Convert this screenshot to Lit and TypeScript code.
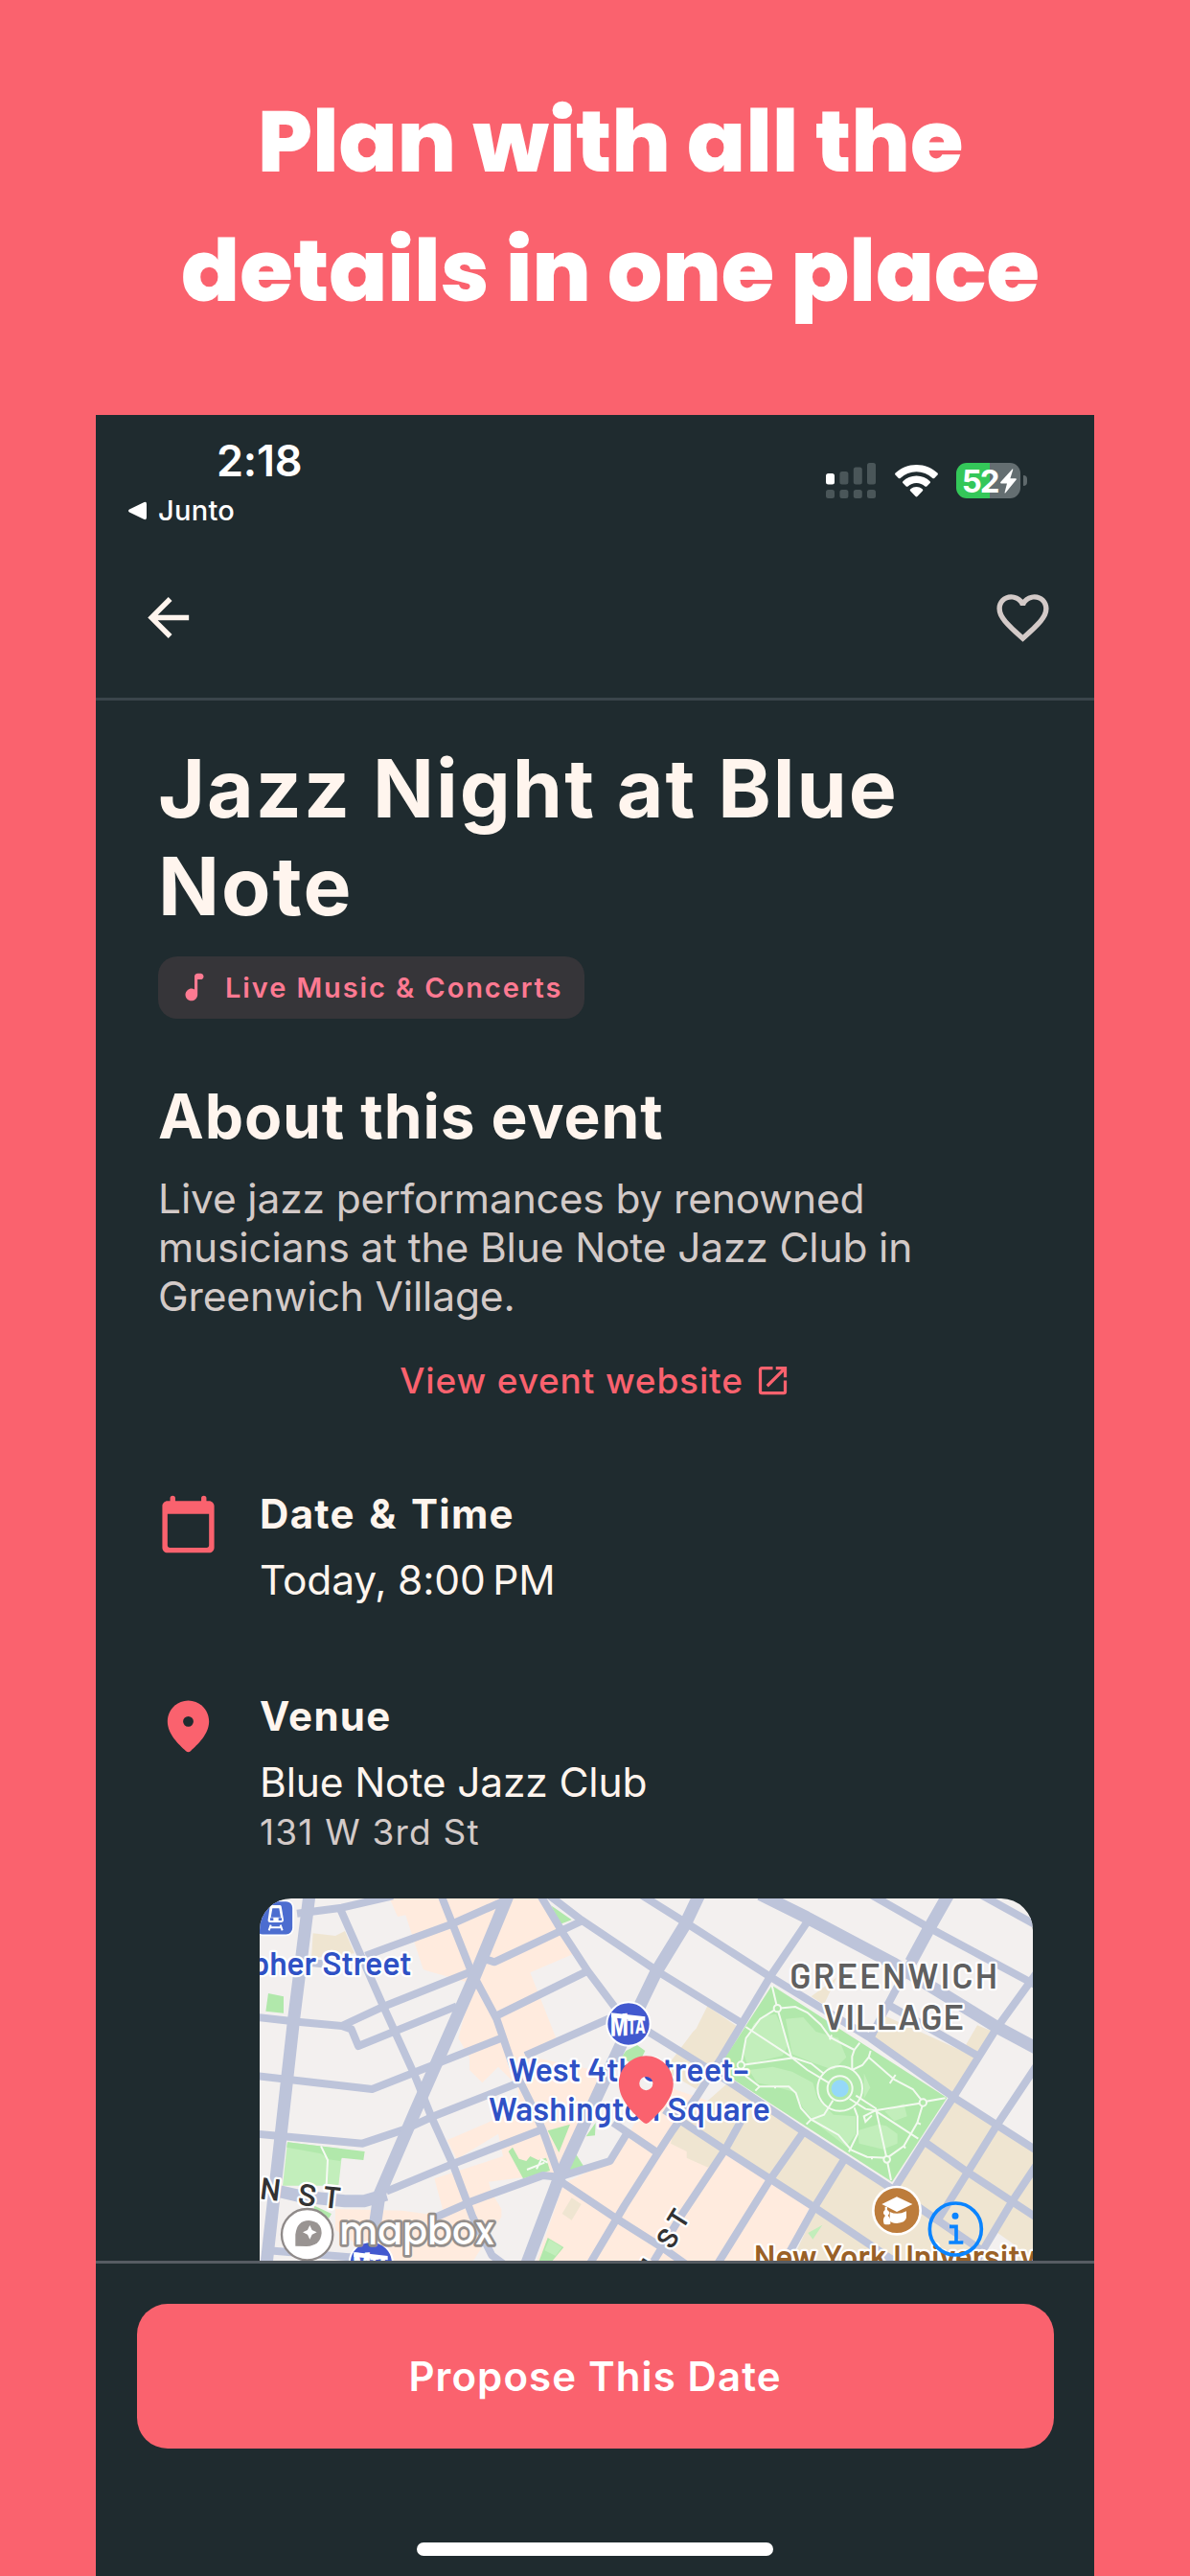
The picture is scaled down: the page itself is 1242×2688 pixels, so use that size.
import { LitElement, html, css, svg } from 'lit';
import { customElement, property, state } from 'lit/decorators.js';

const ICONS = {
  back: 'M20,11V13H8L13.5,18.5L12.08,19.92L4.16,12L12.08,4.08L13.5,5.5L8,11H20Z',
  heart:
    'M12.1,18.55L12,18.65L11.89,18.55C7.14,14.24 4,11.39 4,8.5C4,6.5 5.5,5 7.5,5C9.04,5 10.54,6 11.07,7.36H12.93C13.46,6 14.96,5 16.5,5C18.5,5 20,6.5 20,8.5C20,11.39 16.86,14.24 12.1,18.55M16.5,3C14.76,3 13.09,3.81 12,5.08C10.91,3.81 9.24,3 7.5,3C4.42,3 2,5.41 2,8.5C2,12.27 5.4,15.36 10.55,20.03L12,21.35L13.45,20.03C18.6,15.36 22,12.27 22,8.5C22,5.41 19.58,3 16.5,3Z',
  music:
    'M12 5v8.55c-.94-.54-2.1-.75-3.33-.32-1.34.48-2.37 1.67-2.61 3.07-.46 2.74 1.86 5.08 4.59 4.65 1.96-.31 3.35-2.11 3.35-4.1V7h2c1.1 0 2-.9 2-2s-.9-2-2-2h-2c-1.1 0-2 .9-2 2z',
  external:
    'M14,3V5H17.59L7.76,14.83L9.17,16.24L19,6.41V10H21V3M19,19H5V5H12V3H5C3.89,3 3,3.9 3,5V19A2,2 0 0,0 5,21H19A2,2 0 0,0 21,19V12H19V19Z',
  calendar:
    'M20 3h-1V2a1 1 0 0 0-2 0v1H7V2a1 1 0 0 0-2 0v1H4c-1.1 0-2 .9-2 2v16c0 1.1.9 2 2 2h16c1.1 0 2-.9 2-2V5c0-1.1-.9-2-2-2zM4 8h16v12a1 1 0 0 1-1 1H5a1 1 0 0 1-1-1z',
  pin: 'M12 2C7.6 2 4 5.6 4 10.1C4 15 8.4 19 11.1 21.5Q12 22.3 12.9 21.5C15.6 19 20 15 20 10.1C20 5.6 16.4 2 12 2ZM12 8.1a2 2 0 1 1 0 4a2 2 0 1 1 0-4z',
};

/**
 * AppIcon - one 24x24 glyph, sized by the host
 */
@customElement('app-icon')
export class AppIcon extends LitElement {
  @property() name: keyof typeof ICONS = 'back';

  static styles = css`
    :host {
      display: block;
      flex: none;
    }

    svg {
      display: block;
      width: 100%;
      height: 100%;
      fill: currentColor;
    }
  `;

  render() {
    return html`<svg viewBox="0 0 24 24"><path fill-rule="evenodd" d=${ICONS[this.name]} /></svg>`;
  }
}

/**
 * StatusBar - clock, return link, signal, wifi and battery
 */
@customElement('status-bar')
export class StatusBar extends LitElement {
  @property() time = '2:18';
  @property({ type: Number }) battery = 52;

  static styles = css`
    :host {
      display: flex;
      justify-content: space-between;
      box-sizing: border-box;
      height: 137px;
      padding: 0 70px 0 34px;
      color: #fff;
    }

    .left {
      padding-top: 20px;
    }

    .time {
      margin-left: 92px;
      font-size: 45px;
      font-weight: 600;
      line-height: 56px;
      letter-spacing: -0.2px;
    }

    .return {
      display: flex;
      align-items: center;
      gap: 12px;
      margin-top: 6px;
      font-size: 29px;
      font-weight: 500;
      line-height: 36px;
      letter-spacing: 0.3px;
    }

    .return svg {
      width: 19px;
      height: 20px;
      fill: #fff;
    }

    .right {
      display: flex;
      align-items: center;
    }

    .signal {
      width: 52px;
      height: 37px;
      margin-right: 20px;
    }

    .wifi {
      width: 45px;
      height: 34px;
      margin-right: 19px;
    }

    .battery {
      display: flex;
      align-items: center;
      justify-content: center;
      gap: 1px;
      box-sizing: border-box;
      width: 67px;
      height: 37px;
      padding-left: 2px;
      border-radius: 11px;
      font-size: 33px;
      font-weight: 700;
      letter-spacing: -2.2px;
    }

    .bolt {
      width: 17px;
      height: 26px;
      margin-left: 2px;
      fill: #fff;
    }

    .nub {
      width: 4px;
      height: 11px;
      margin-left: 3px;
      border-radius: 0 5px 5px 0;
      background: #5f696c;
    }
  `;

  render() {
    const fill = `linear-gradient(90deg, #34c759 ${this.battery}%, #646e71 ${this.battery}%)`;
    return html`
      <div class="left">
        <div class="time">${this.time}</div>
        <div class="return">
          <svg viewBox="0 0 19 20">
            <path d="M1 8.6 L16 1.2 Q19 0 19 3 V17 Q19 20 16 18.8 L1 11.4 Q-1 10 1 8.6Z" />
          </svg>
          <span>Junto</span>
        </div>
      </div>
      <div class="right">
        <svg class="signal" viewBox="0 0 52 37" fill="#4a5659">
          <rect x="0" y="11" width="9" height="11.5" rx="2.5" fill="#fff" />
          <rect x="14.4" y="9" width="9" height="13.5" rx="2.5" />
          <rect x="28.8" y="4.5" width="9" height="18" rx="2.5" />
          <rect x="43" y="0" width="9" height="22.5" rx="2.5" />
          ${[0, 14.4, 28.8, 43].map(
            (x) => svg`<rect x=${x} y="28" width="9" height="9" rx="2.5" />`
          )}
        </svg>
        <svg class="wifi" viewBox="0 0 45 34" fill="#fff">
          <path d="M22.5 0C31 0 38.8 3.3 44.4 8.6Q45.4 9.6 44.5 10.6L41.2 13.9Q40.3 14.8 39.3 13.9A24.5 24.5 0 0 0 5.7 13.9Q4.7 14.8 3.8 13.9L.5 10.6Q-.4 9.6.6 8.6C6.2 3.3 14 0 22.5 0Z" />
          <path d="M22.5 11.6C28 11.6 33 13.8 36.6 17.2Q37.6 18.2 36.7 19.1L33.3 22.4Q32.4 23.3 31.4 22.4A13 13 0 0 0 13.6 22.4Q12.6 23.3 11.7 22.4L8.3 19.1Q7.4 18.2 8.4 17.2C12 13.8 17 11.6 22.5 11.6Z" />
          <path d="M22.5 23C25 23 27.2 23.9 28.9 25.4Q29.8 26.3 28.9 27.2L23.4 33Q22.5 33.9 21.6 33L16.1 27.2Q15.2 26.3 16.1 25.4C17.8 23.9 20 23 22.5 23Z" />
        </svg>
        <div class="battery" style="background: ${fill}">
          <span>${this.battery}</span>
          <svg class="bolt" viewBox="0 0 17 26">
            <path d="M12.6 .4Q13.6 0 13.2 1.3L10.4 10.2H16Q17.4 10.4 16.5 11.8L5.5 25.2Q4.4 26.2 4.6 24.8L7 15.4H1Q-.5 15.2 .5 13.8Z" />
          </svg>
        </div>
        <div class="nub"></div>
      </div>
    `;
  }
}

const MAJOR_ROADS = [
  'M189 50L140 440L54 1210',
  'M812 50L705 310L520 730L408 990L395 1080L390 1210',
  'M868 1210L970 940L1090 680L1160 530L1275 292L1365 145L1410 50',
  'M60 972L160 995L300 1010L360 1010L430 990',
  'M1600 50L1745 122L2020 268L2340 465L2470 535',
  'M2190 50L2130 155L2072 262',
];

const MINOR_ROADS = [
  'M20 434L160 450L290 462L320 472L342 525L650 400',
  'M290 462L410 406L700 290',
  'M20 618L385 660L520 607L790 500',
  'M20 800L355 830L490 785L570 748L845 640',
  'M285 95L420 400L520 620L570 745L640 900L700 1060L760 1180L800 1210',
  'M150 110L290 92L450 55',
  'M365 242L635 143L800 70',
  'M170 262L230 268',
  'M600 50L695 290L775 440L830 600L880 700L920 790L970 930',
  'M730 250L768 262L975 165L1045 132',
  'M775 430L1060 290',
  'M865 555L1130 438',
  'M910 50L985 175L1060 290L1150 410',
  'M935 50L1040 130L1290 298L1545 455',
  'M1225 50L1380 147L1630 307L1945 500L2205 685L2470 855',
  'M1745 140L1630 310L1480 560L1400 685L1325 790L1280 860L1175 1025L1065 1210',
  'M1250 480L1500 635L1735 792L2010 970L2330 1190',
  'M2470 290L2340 470L2205 685L2110 830L2015 980',
  'M2075 255L2000 395L1945 500',
  'M2000 395L2280 555',
  'M1300 725L1490 850L1630 940L1770 1030L2030 1205',
  'M1140 765L1280 860',
  'M970 945L1150 1065L1300 1160L1370 1210',
  'M1735 795L1630 945L1465 1210',
  'M1540 760L1490 850L1350 1060L1260 1210',
  'M1860 885L1770 1030L1670 1210',
  'M2470 580L2340 775L2250 920L2150 1080',
  'M2115 825L2250 920L2470 1065',
  'M2470 890L2390 1010L2270 1210',
  'M1945 50L2130 155L2470 338',
  'M2280 45L2470 150',
  'M430 980L640 893L920 785',
  'M575 1065L700 1010L920 930L970 935L1130 885L1185 795',
  'M60 1165L340 1188',
];

// Footpaths of Washington Square Park
const FOOTPATHS = [
  'M1637 335L1654 407L1698 560L1748 600L1815 640',
  'M1654 407L1600 440L1556 500L1540 585L1705 562L1760 580L1800 612',
  'M1555 465L1700 560',
  'M1654 407L1710 402L1748 420L1790 458L1818 497L1895 537',
  'M1818 505L1824 490M1895 537L1912 515M1895 537L1888 558V600',
  'M1540 585L1556 620L1598 652L1690 652L1712 672L1728 720L1760 755L1845 803L1885 850L1935 872L1998 875L2050 838L2092 765L2110 705',
  'M1598 652L1585 665M1647 652V658M1745 770L1760 755L1800 740L1828 695',
  'M1888 600L1920 585L1940 560L1946 540M1940 560L2020 630L2078 660L2110 700L2180 688',
  'M2024 615L2006 642M1880 690L1930 722L1960 727L2110 703',
  'M1900 680L1962 720L1996 875L2010 945M1960 727L2095 815',
  'M1960 727L1925 745L1930 762L1950 742M1895 718L1905 745V800L1878 856',
  'M2092 765L2103 770M2050 838L2055 845M1950 872V880',
];

/**
 * VenueMap - static map tile around West 4th Street with the venue marker
 */
@customElement('venue-map')
export class VenueMap extends LitElement {
  static styles = css`
    :host {
      display: block;
      height: 600px;
      border-radius: 33px;
      overflow: hidden;
      background: #f3f0ef;
    }

    svg {
      display: block;
      width: 807px;
      height: 378px;
    }

    .road {
      fill: none;
      stroke: #bdc4da;
      stroke-linejoin: round;
    }

    .footpath {
      fill: none;
      stroke: #f3faf0;
      stroke-width: 6;
    }

    .peach {
      fill: #ffebde;
    }

    .beige {
      fill: #efe5d1;
    }

    .green {
      fill: #b1e8ab;
    }

    .lawn {
      fill: #c2eebb;
    }

    .label {
      font-family: Barlow, Roboto, sans-serif;
      font-weight: 600;
      font-size: 102px;
      paint-order: stroke;
      stroke: #fff;
      stroke-width: 14px;
      stroke-linejoin: round;
    }

    .transit {
      fill: #2f51c5;
    }

    .area {
      fill: #606060;
      font-size: 109px;
    }

    .street {
      fill: #333;
      font-size: 96px;
    }

    .school {
      fill: #9a6127;
    }

    .brand {
      font-family: Poppins, Inter, sans-serif;
      font-weight: 500;
      font-size: 122px;
      fill: #fff;
      paint-order: stroke;
      stroke: #948f8c;
      stroke-width: 17px;
      stroke-linejoin: round;
    }

    .mta {
      font-family: Roboto, sans-serif;
      font-weight: 900;
      fill: #fff;
    }
  `;

  private renderLand() {
    return svg`
      <path class="peach" d="M440 63H905L1000 190L1020 235L880 295L965 510L865 555L1080 600L1130 640L1030 800L970 925L905 930L750 950L760 985L790 1035V1060L700 1200L590 1200L610 1050L580 940L795 870L780 800L650 880L620 820L850 720L840 650L780 590L730 640L690 600V560L655 500L700 330L560 290L545 285L490 115L465 120Z" />
      <path class="peach" d="M270 1035L480 1040L620 1060L600 1197H410L270 1100Z" />
      <path class="peach" d="M985 955L1120 890L1190 800L1270 640L1420 690L1860 885L1750 1040L1680 1200H900Z" />
      <path class="beige" d="M200 172L270 180L300 165L330 235L195 250Z" />
      <path class="beige" d="M1390 480L1400 470L1435 400L1530 465L1470 560L1400 660L1300 600Z" />
      <path class="beige" d="M1330 790L1500 640L2010 970L2205 690L2400 810L2460 850V1200H1690L1770 1030L1630 940L1490 855L1437 905L1370 875V855L1320 830Z" />
      <path class="beige" d="M1990 430L2275 560L2205 680L1950 505ZM2280 460L2330 480L2260 570L2245 520ZM1760 370L1840 310L1800 395Z" />
      <path class="beige" d="M1010 1000L1040 1020L1010 1070L980 1050Z" />
      <path fill="#f3f0ef" d="M2330 1100L2400 1150V1197H2300ZM1770 1045L1740 1110L1700 1197H1660Z" />
      <path class="green" d="M945 85L1010 130L975 143Z" />
      <path class="green" d="M60 360L108 370V422L52 416Z" />
      <path class="lawn" d="M120 826L290 847L290 872L280 962L105 962Z" />
      <path class="green" d="M120 826L362 855L358 882L290 875L285 885L250 880L225 862L118 842ZM205 1025L258 1050L250 1064L200 1045Z" />
      <path class="green" d="M825 842L812 855L858 940L942 915L930 875L905 882L880 870L868 885L845 878Z" />
      <path class="green" d="M935 790L1005 770L970 858ZM1020 858L1050 905L1000 918ZM1055 808L1085 765L1083 805Z" />
      <path class="green" d="M1180 540L1215 522L1240 540L1215 590L1165 560Z" />
      <path class="green" d="M935 1125L985 1155L950 1197H908Z" />
      <path class="lawn" d="M940 1130L980 1155L960 1182L925 1165ZM1750 1110L1795 1085L1765 1130Z" />
      <path d="M225 838L246 882L242 960M870 912L925 890M900 910L915 880L935 890" stroke="#f6faf3" stroke-width="6" fill="none" />
    `;
  }

  private renderPark() {
    return svg`
      <path class="green" d="M1637 335L2185 687L2013 950L1467 598Z" />
      <path class="lawn" d="M1580 455L1612 430L1650 425L1690 520L1670 555L1560 582L1545 540ZM1680 440L1735 435L1775 480L1845 500L1870 560L1830 600L1760 575L1700 550Z" />
      <path class="lawn" d="M1565 600L1640 590L1700 605L1765 640L1780 690L1830 740L1900 745V800L1870 840L1780 770L1735 720L1710 670L1640 650L1590 640ZM1925 610L1945 655L1925 690ZM1905 790L1970 770L1995 775L2030 800L2030 830L1985 848L1910 830ZM1990 730L2050 705L2060 745L2020 760Z" />
      ${FOOTPATHS.map((d) => svg`<path class="footpath" d=${d} />`)}
      <circle class="footpath" cx="1850" cy="658" r="70" />
      <circle class="footpath" cx="1850" cy="658" r="39" />
      <circle cx="1850" cy="658" r="27" fill="#95d8f8" />
      <circle class="footpath" cx="1654" cy="407" r="11" style="fill:#b1e8ab" />
      <circle class="footpath" cx="1540" cy="585" r="11" style="fill:#b1e8ab" />
      <circle class="footpath" cx="2110" cy="702" r="11" style="fill:#b1e8ab" />
      <circle class="footpath" cx="1997" cy="880" r="10" style="fill:#b1e8ab" />
    `;
  }

  // Transit roundel, the letters shrink to the right under a shared top bar
  private renderMta(cx: number, cy: number) {
    return svg`
      <g transform="translate(${cx} ${cy})">
        <circle r="68" fill="#4259cf" stroke="#fff" stroke-width="6" />
        <path fill="#fff" d="M-54 -35L52 -23V-10L-54 -20Z" />
        <text class="mta" transform="matrix(1 -.04 0 1 -57 38)" font-size="98" textLength="56" lengthAdjust="spacingAndGlyphs">M</text>
        <text class="mta" transform="matrix(1 -.06 0 1 -4 32)" font-size="72" textLength="56" lengthAdjust="spacingAndGlyphs">TA</text>
      </g>
    `;
  }

  private renderBadges() {
    return svg`
      <rect x="20" y="70" width="118" height="108" rx="22" fill="#4c6dd0" stroke="#fff" stroke-width="5" />
      <path fill="#fff" fill-rule="evenodd" d="M70 84H96Q100 84 101 88L108 130Q108 138 100 138H66Q58 138 59 130L65 88Q66 84 70 84ZM73 94L68 122H99L94 94ZM66 132h10v-8h-10zM92 132h10v-8h-10z" />
      <path d="M68 146L62 163M98 146L104 163M64 154H102" stroke="#fff" stroke-width="6" fill="none" />

      ${this.renderMta(1188, 456)} ${this.renderMta(382, 1205)}

      <circle cx="2028" cy="1040" r="74" fill="#bd7c3b" stroke="#fff" stroke-width="8" />
      <path fill="#fff" d="M2028 997L2077 1020L2028 1044L1981 1020Z" />
      <path fill="#fff" d="M2006 1044Q2030 1056 2058 1042V1062Q2055 1078 2028 1080Q2008 1079 2006 1070Z" />
      <path fill="#fff" d="M1991 1028h7v10q12 8 2 18q10 8 8 26q-10 4-20 0q-6-16 4-26q-12-8-1-18z" />
    `;
  }

  private renderLabels() {
    return svg`
      <text class="label transit" x="7" y="303" textLength="502">pher Street</text>
      <text class="label transit" x="812" y="635" textLength="752">West 4th Street–</text>
      <text class="label transit" x="750" y="760" textLength="882">Washington Square</text>
      <text class="label area" x="1693" y="344" textLength="650">GREENWICH</text>
      <text class="label area" x="1798" y="473" textLength="440">VILLAGE</text>
      <text class="label school" x="1580" y="1222" textLength="884">New York University</text>
      <text class="label street" transform="translate(31 1003) rotate(7)">N</text>
      <text class="label street" transform="translate(151 1022) rotate(6)">S</text>
      <text class="label street" transform="translate(228 1030) rotate(6)">T</text>
      <text class="label street" transform="translate(1323 1165) rotate(-58)" style="font-size:88px">S</text>
      <text class="label street" transform="translate(1357 1103) rotate(-58)" style="font-size:88px">T</text>
      <text class="label street" transform="translate(1258 1265) rotate(-58)" style="font-size:88px">N</text>
    `;
  }

  render() {
    return html`
      <svg viewBox="33 63 2421 1134">
        ${this.renderLand()}
        ${MINOR_ROADS.map((d) => svg`<path class="road" stroke-width="24" d=${d} />`)}
        ${MAJOR_ROADS.map((d) => svg`<path class="road" stroke-width="39" d=${d} />`)}
        ${this.renderPark()} ${this.renderLabels()} ${this.renderBadges()}

        <!-- Attribution mark -->
        <circle cx="182" cy="1115" r="80" fill="#fff" stroke="#8f8a89" stroke-width="7" />
        <path fill="#999492" d="M145 1151V1115Q150 1071 187 1071Q226 1074 227 1110Q224 1150 180 1152Z" />
        <path fill="#fff" d="M190 1086L197 1101L212 1108L197 1115L190 1130L183 1115L168 1108L183 1101Z" />
        <text class="brand" x="283" y="1145" textLength="484" lengthAdjust="spacingAndGlyphs">mapbox</text>

        <!-- Info button -->
        <g fill="none" stroke="#0a84ff" stroke-width="11">
          <circle cx="2212" cy="1098" r="81" />
          <path d="M2193 1090H2214V1140M2191 1140H2236" />
          <circle cx="2211" cy="1057" r="5" />
        </g>

        <!-- Venue marker -->
        <path fill="#fa626e" fill-rule="evenodd" transform="translate(1115.2 534.7) scale(10.65)" d=${ICONS.pin} />
      </svg>
    `;
  }
}

@customElement('app-root')
export class AppRoot extends LitElement {
  @state() eventTitle = 'Jazz Night at Blue Note';
  @state() category = 'Live Music & Concerts';
  @state() description =
    'Live jazz performances by renowned musicians at the Blue Note Jazz Club in Greenwich Village.';
  @state() when = 'Today, 8:00\u2009PM';
  @state() venueName = 'Blue Note Jazz Club';
  @state() venueAddress = '131 W 3rd St';

  static styles = css`
    :host {
      display: flex;
      flex-direction: column;
      box-sizing: border-box;
      width: 1242px;
      height: 2688px;
      overflow: hidden;
      background: #fa626e;
      font-family: Inter, 'Liberation Sans', sans-serif;
    }

    .headline {
      box-sizing: border-box;
      height: 433px;
      margin: 0;
      padding: 80px 0 0 32px;
      color: #fff;
      font-family: Poppins, Inter, sans-serif;
      font-size: 90px;
      font-weight: 800;
      line-height: 135px;
      text-align: center;
      letter-spacing: -0.1px;
    }

    .phone {
      display: flex;
      flex: 1;
      flex-direction: column;
      width: 1042px;
      min-height: 0;
      margin: 0 100px;
      background: #1f2b2f;
      color: #fff5ee;
    }

    .nav {
      display: flex;
      align-items: center;
      justify-content: space-between;
      box-sizing: border-box;
      height: 161px;
      padding: 0 42px 10px 43px;
      border-bottom: 3px solid #3a454b;
    }

    .nav app-icon {
      width: 65px;
      height: 65px;
    }

    .favorite {
      color: #d3cac8;
    }

    .content {
      box-sizing: border-box;
      height: 1628px;
      padding: 41px 64px 0 65px;
      overflow: hidden;
    }

    h1 {
      margin: 0;
      font-size: 84px;
      font-weight: 700;
      line-height: 102.3px;
      letter-spacing: 2px;
    }

    .chip {
      display: flex;
      align-items: center;
      gap: 13px;
      box-sizing: border-box;
      width: 445px;
      height: 65px;
      margin-top: 21px;
      padding-left: 19px;
      border-radius: 20px;
      background: #363539;
      color: #ff7a92;
      font-size: 29px;
      font-weight: 600;
      letter-spacing: 1.9px;
      white-space: nowrap;
    }

    .chip app-icon {
      width: 38px;
      height: 38px;
    }

    h2 {
      margin: 63px 0 0;
      font-size: 64px;
      font-weight: 700;
      line-height: 78px;
      letter-spacing: 0.9px;
    }

    .description {
      margin: 21px 0 0;
      color: #d3cac8;
      font-size: 42.5px;
      line-height: 51px;
      letter-spacing: -0.15px;
    }

    .link {
      display: flex;
      align-items: center;
      justify-content: center;
      gap: 11px;
      margin-top: 39px;
      color: #fa626e;
      font-size: 37px;
      font-weight: 500;
      line-height: 48px;
      letter-spacing: 0.85px;
    }

    .link app-icon {
      width: 39px;
      height: 39px;
    }

    .row {
      display: grid;
      grid-template-columns: 106px 1fr;
      margin-top: 89px;
    }

    .row + .row {
      margin-top: 90.5px;
    }

    .row > app-icon {
      width: 65px;
      height: 65px;
      margin: 4px 0 0 -1px;
      color: #fa626e;
    }

    .row-title {
      font-size: 42px;
      font-weight: 700;
      line-height: 52px;
      letter-spacing: 1.3px;
      word-spacing: 3px;
    }

    .row-value {
      margin-top: 17px;
      font-size: 42.5px;
      line-height: 52px;
      letter-spacing: -0.15px;
    }

    .row-sub {
      margin-top: 3px;
      color: #d3cac8;
      font-size: 37px;
      line-height: 46px;
      letter-spacing: 1.2px;
    }

    venue-map {
      margin-top: 46px;
    }

    .footer {
      display: flex;
      flex: 1;
      flex-direction: column;
      align-items: center;
      border-top: 3px solid #565c63;
    }

    .propose {
      width: 957px;
      height: 151px;
      margin-top: 42px;
      border: none;
      border-radius: 32px;
      background: #fa626e;
      color: #fff;
      font-family: inherit;
      font-size: 42px;
      font-weight: 600;
      letter-spacing: 1.1px;
    }

    .home-indicator {
      width: 372px;
      height: 14px;
      margin-top: 98px;
      border-radius: 7px;
      background: #fff;
    }
  `;

  render() {
    return html`
      <h1 class="headline">Plan with all the<br />details in one place</h1>

      <div class="phone">
        <status-bar></status-bar>

        <div class="nav">
          <app-icon name="back"></app-icon>
          <app-icon class="favorite" name="heart"></app-icon>
        </div>

        <div class="content">
          <h1>${this.eventTitle}</h1>
          <div class="chip">
            <app-icon name="music"></app-icon>
            <span>${this.category}</span>
          </div>

          <h2>About this event</h2>
          <p class="description">${this.description}</p>
          <div class="link">
            <span>View event website</span>
            <app-icon name="external"></app-icon>
          </div>

          <div class="row">
            <app-icon name="calendar"></app-icon>
            <div>
              <div class="row-title">Date &amp; Time</div>
              <div class="row-value">${this.when}</div>
            </div>
          </div>

          <div class="row">
            <app-icon name="pin"></app-icon>
            <div>
              <div class="row-title">Venue</div>
              <div class="row-value">${this.venueName}</div>
              <div class="row-sub">${this.venueAddress}</div>
              <venue-map></venue-map>
            </div>
          </div>
        </div>

        <div class="footer">
          <button class="propose">Propose This Date</button>
          <div class="home-indicator"></div>
        </div>
      </div>
    `;
  }
}

declare global {
  interface HTMLElementTagNameMap {
    'app-icon': AppIcon;
    'status-bar': StatusBar;
    'venue-map': VenueMap;
    'app-root': AppRoot;
  }
}
